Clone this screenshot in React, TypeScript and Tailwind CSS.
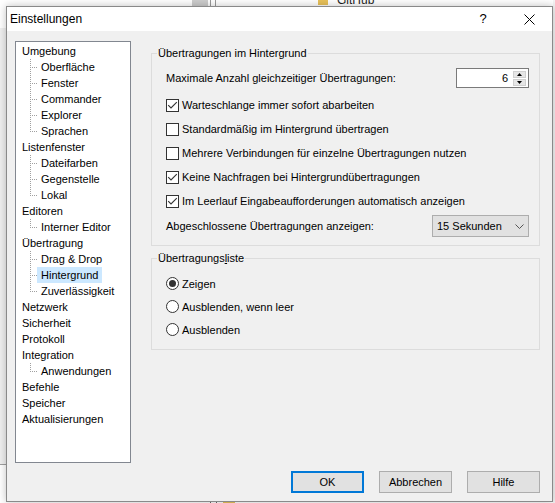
import React from "react";

type Node = { label: string; children?: string[] };

const tree: Node[] = [
  { label: "Umgebung", children: ["Oberfläche", "Fenster", "Commander", "Explorer", "Sprachen"] },
  { label: "Listenfenster", children: ["Dateifarben", "Gegenstelle", "Lokal"] },
  { label: "Editoren", children: ["Interner Editor"] },
  { label: "Übertragung", children: ["Drag & Drop", "Hintergrund", "Zuverlässigkeit"] },
  { label: "Netzwerk" },
  { label: "Sicherheit" },
  { label: "Protokoll" },
  { label: "Integration", children: ["Anwendungen"] },
  { label: "Befehle" },
  { label: "Speicher" },
  { label: "Aktualisierungen" },
];

const SELECTED = "Hintergrund";

function Connector({ last }: { last: boolean }) {
  return (
    <svg width="7" height="16" className="shrink-0" shapeRendering="crispEdges">
      <line x1="0.5" y1="0" x2="0.5" y2={last ? 9 : 16} stroke="#a0a0a0" strokeDasharray="1 1" />
      <line x1="2" y1="8.5" x2="7" y2="8.5" stroke="#a0a0a0" strokeDasharray="1 1" />
    </svg>
  );
}

function TreeLabel({ text }: { text: string }) {
  const sel = text === SELECTED;
  return (
    <span className={`px-[4px] h-[16px] leading-[16px] whitespace-nowrap ${sel ? "bg-[#cce8ff]" : ""}`}>
      {text}
    </span>
  );
}

function Check({ checked }: { checked: boolean }) {
  return (
    <span className="w-[13px] h-[13px] border border-[#333333] bg-white shrink-0 flex items-center justify-center">
      {checked && (
        <svg width="11" height="11" viewBox="0 0 11 11">
          <path d="M1.2 5.2 L4 8 L9.8 2.2" stroke="#333333" strokeWidth="1.1" fill="none" />
        </svg>
      )}
    </span>
  );
}

function Radio({ checked }: { checked: boolean }) {
  return (
    <svg width="13" height="13" viewBox="0 0 13 13" className="shrink-0">
      <circle cx="6.5" cy="6.5" r="6" fill="#ffffff" stroke="#333333" />
      {checked && <circle cx="6.5" cy="6.5" r="3.5" fill="#333333" />}
    </svg>
  );
}

function CheckRow({ checked, label }: { checked: boolean; label: string }) {
  return (
    <div className="h-[24px] flex items-center gap-[3px]">
      <Check checked={checked} />
      <span>{label}</span>
    </div>
  );
}

function RadioRow({ checked, label }: { checked: boolean; label: string }) {
  return (
    <div className="h-[23px] flex items-center gap-[3px]">
      <Radio checked={checked} />
      <span>{label}</span>
    </div>
  );
}

function Button({ label, primary }: { label: string; primary?: boolean }) {
  return (
    <div
      className={`w-[73px] h-[22px] flex items-center justify-center bg-[#e1e1e1] ${
        primary ? "border-2 border-[#0078d7]" : "border border-[#adadad]"
      }`}
    >
      {label}
    </div>
  );
}

export default function App() {
  return (
    <div className="relative w-[555px] h-[503px] overflow-hidden bg-white font-['Liberation_Sans',Arial,sans-serif] text-[11px] leading-[16px] text-black">
      {/* explorer window behind the dialog */}
      <div className="absolute left-[192px] top-0 w-[16px] h-[6px] bg-[#cdcdcd]" />
      <div className="absolute left-[210px] top-0 w-[1px] h-[6px] bg-[#9a9a9a]" />
      <div className="absolute left-[215px] top-0 w-[1px] h-[6px] bg-[#9a9a9a]" />
      <div className="absolute left-[318px] top-0 w-[10px] h-[5px] bg-[#e8c15a]" />
      <div className="absolute left-[337px] top-[-7px] h-[14px] leading-[14px] text-[12px] text-[#1e1e1e]">GitHub</div>
      <div className="absolute left-0 top-[28px] w-[6px] h-[437px] bg-[#f0f0f0]" />
      <div className="absolute left-0 top-[464px] w-[6px] h-[1px] bg-[#a0a0a0]" />
      <div className="absolute left-[210px] top-[500px] w-[1px] h-[3px] bg-[#6a6a6a]" />
      <div className="absolute left-[216px] top-[500px] w-[1px] h-[3px] bg-[#6a6a6a]" />
      <div className="absolute left-[223px] top-[501px] w-[12px] h-[2px] bg-[#e8c15a]" />
      <div className="absolute right-0 top-0 w-[2px] h-[503px] bg-[#f4f4f4]" />

      {/* dialog window */}
      <div className="absolute left-[6px] top-[6px] w-[547px] h-[496px] border border-[#8a8a8a] flex flex-col shadow-[0_0_8px_rgba(0,0,0,0.25)]">
        <div className="h-[24px] bg-white flex items-center shrink-0">
          <span className="pl-[3px] flex-1 text-[12px]">Einstellungen</span>
          <div className="w-[46px] h-full flex items-center justify-center text-[13px]">?</div>
          <div className="w-[46px] h-full flex items-center justify-center">
            <svg width="11" height="11" viewBox="0 0 11 11">
              <path d="M0.5 0.5 L10.5 10.5 M10.5 0.5 L0.5 10.5" stroke="#000" strokeWidth="1" />
            </svg>
          </div>
        </div>

        <div className="flex-1 bg-[#f0f0f0] flex pl-[8px] pt-[10px] pr-[12px] pb-[8px] gap-[20px]">
          {/* settings tree */}
          <div className="w-[116px] h-[422px] border border-[#828790] bg-white pt-[1px] pl-[2px] shrink-0">
            {tree.map((n) => (
              <div key={n.label}>
                <div className="h-[16px] flex">
                  <TreeLabel text={n.label} />
                </div>
                {n.children?.map((c, i) => (
                  <div key={c} className="h-[16px] flex pl-[12px]">
                    <Connector last={i === n.children!.length - 1} />
                    <TreeLabel text={c} />
                  </div>
                ))}
              </div>
            ))}
          </div>

          {/* settings page */}
          <div className="flex-1 flex flex-col">
            <div className="relative mt-[12px] border border-[#dcdcdc] pt-[14px] pl-[14px] pr-[10px] pb-[8px]">
              <span className="absolute top-[-9px] left-[5px] px-[1px] bg-[#f0f0f0]">
                Übertragungen im Hintergrund
              </span>
              <div className="h-[20px] flex items-center justify-between">
                <span>Maximale Anzahl gleichzeitiger Übertragungen:</span>
                <div className="w-[73px] h-[20px] border border-[#7a7a7a] bg-white flex items-center">
                  <span className="flex-1 text-right pr-[5px]">6</span>
                  <div className="w-[13px] mr-[2px] flex flex-col gap-[1px]">
                    <div className="h-[7px] bg-[#e6e6e6] border border-[#d0d0d0] flex items-center justify-center">
                      <svg width="5" height="3" viewBox="0 0 5 3">
                        <path d="M0 3 L2.5 0 L5 3 Z" fill="#000" />
                      </svg>
                    </div>
                    <div className="h-[7px] bg-[#e6e6e6] border border-[#d0d0d0] flex items-center justify-center">
                      <svg width="5" height="3" viewBox="0 0 5 3">
                        <path d="M0 0 L2.5 3 L5 0 Z" fill="#000" />
                      </svg>
                    </div>
                  </div>
                </div>
              </div>
              <div className="mt-[5px]">
                <CheckRow checked label="Warteschlange immer sofort abarbeiten" />
                <CheckRow checked={false} label="Standardmäßig im Hintergrund übertragen" />
                <CheckRow checked={false} label="Mehrere Verbindungen für einzelne Übertragungen nutzen" />
                <CheckRow checked label="Keine Nachfragen bei Hintergrundübertragungen" />
                <CheckRow checked label="Im Leerlauf Eingabeaufforderungen automatisch anzeigen" />
              </div>
              <div className="mt-[2px] h-[22px] flex items-center justify-between">
                <span>Abgeschlossene Übertragungen anzeigen:</span>
                <div className="w-[97px] h-[22px] bg-[#e1e1e1] border border-[#adadad] flex items-center pl-[4px] pr-[4px]">
                  <span className="flex-1">15 Sekunden</span>
                  <svg width="9" height="5" viewBox="0 0 9 5">
                    <path d="M0.5 0.5 L4.5 4.5 L8.5 0.5" stroke="#555" strokeWidth="1" fill="none" />
                  </svg>
                </div>
              </div>
            </div>

            <div className="relative mt-[12px] border border-[#dcdcdc] pt-[13px] pl-[14px] pr-[10px] pb-[8px]">
              <span className="absolute top-[-9px] left-[5px] px-[1px] bg-[#f0f0f0]">
                Übertragungs<span className="underline">l</span>iste
              </span>
              <RadioRow checked label="Zeigen" />
              <RadioRow checked={false} label="Ausblenden, wenn leer" />
              <RadioRow checked={false} label="Ausblenden" />
            </div>

            <div className="mt-auto flex justify-end gap-[15px]">
              <Button label="OK" primary />
              <Button label="Abbrechen" />
              <Button label="Hilfe" />
            </div>
          </div>
        </div>
      </div>
    </div>
  );
}
